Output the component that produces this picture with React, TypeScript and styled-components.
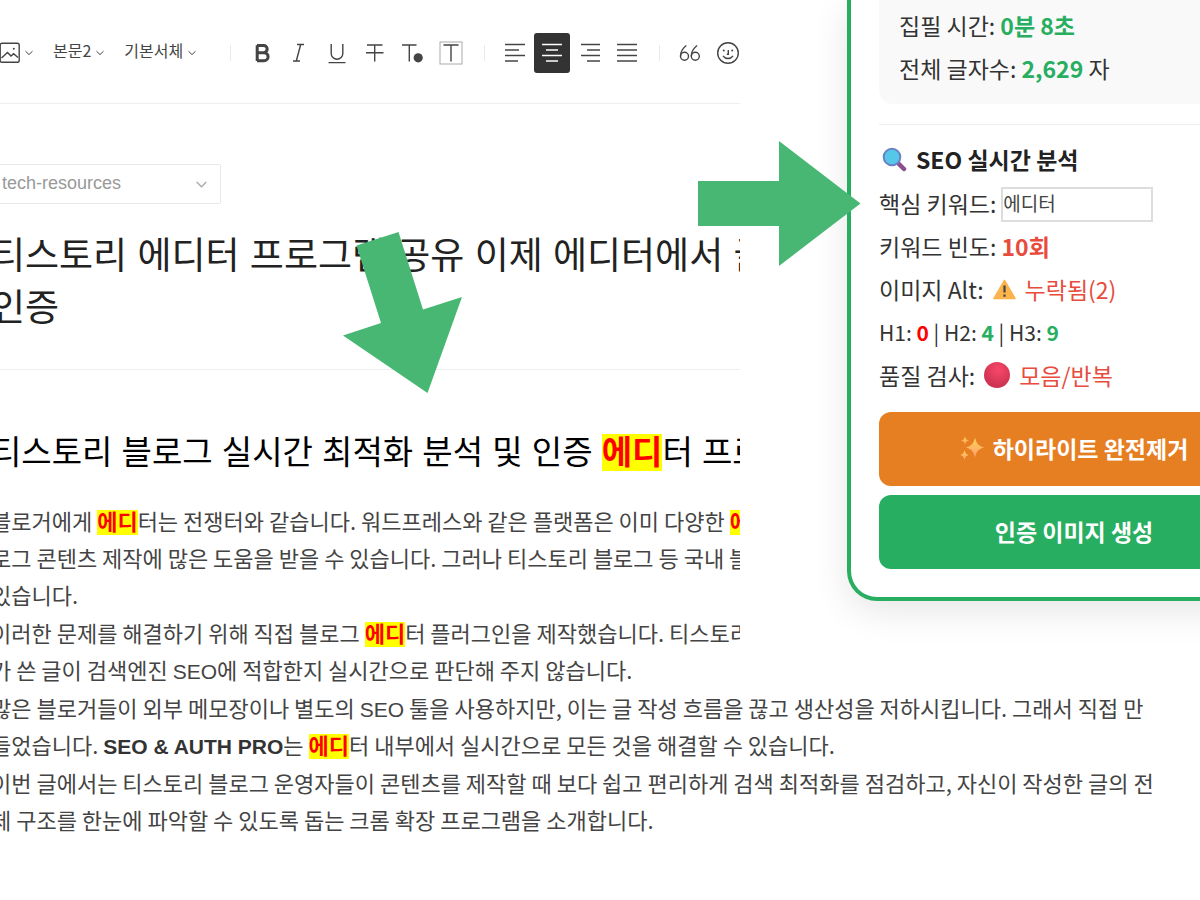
import React from "react";
import styled, { createGlobalStyle } from "styled-components";

const korean = `"Noto Sans CJK KR", "Liberation Sans", sans-serif`;
const latin = `"Liberation Sans", "Noto Sans CJK KR", sans-serif`;
const green = "#27ae60";
const red = "#e74c3c";

const GlobalStyle = createGlobalStyle`
  *, *::before, *::after { box-sizing: border-box; }
  body { margin: 0; background: #fff; color: #333; font-family: ${korean}; }
  h1, h2, h3, p { margin: 0; font-weight: 400; }
  button, input, select { font-family: inherit; }
`;

const Page = styled.div`
  position: relative;
  display: grid;
  grid-template-columns: minmax(0, 37fr) minmax(0, 23fr);
  align-items: start;
  min-height: 100vh;
  overflow: hidden;
`;

/* ---------- editor ---------- */

const Editor = styled.main`
  min-width: 0;
`;

const Toolbar = styled.div`
  display: flex;
  align-items: center;
  padding: 33px 0 30px;
  border-bottom: 1px solid #eee;
  overflow: hidden;
`;

const Menus = styled.div`
  display: flex;
  flex: none;
  gap: 20px;
  margin-right: 19px;
`;

const MenuButton = styled.button`
  display: flex;
  align-items: center;
  gap: 5px;
  padding: 0;
  border: 0;
  background: none;
  color: #444;
  font-size: 16px;
  line-height: 34px;
`;

const MenuLabel = styled.span`
  padding-bottom: 6px;
`;

const Divider = styled.span`
  flex: none;
  width: 1px;
  height: 16px;
  margin: 0 12px 0 15px;
  background: #eaeaea;
`;

const Tools = styled.div<{ $gap: number }>`
  display: flex;
  flex: none;
  gap: ${(p) => p.$gap}px;
`;

const Tool = styled.button<{ $active?: boolean }>`
  display: grid;
  place-items: center;
  width: 36px;
  height: 40px;
  padding: 0;
  border: 0;
  border-radius: 3px;
  background: ${(p) => (p.$active ? "#333" : "none")};
  color: ${(p) => (p.$active ? "#fff" : "#444")};
`;

const CategoryBox = styled.div`
  display: grid;
  align-items: center;
  width: 221px;
  margin-top: 60px;
`;

const CategorySelect = styled.select`
  grid-area: 1 / 1;
  appearance: none;
  height: 40px;
  padding: 0 0 2px 2px;
  border: 1px solid #e8e8e8;
  border-left: 0;
  border-radius: 0 2px 2px 0;
  background: #fff;
  color: #999;
  font-family: ${latin};
  font-size: 18px;
`;

const CategoryArrow = styled.span`
  grid-area: 1 / 1;
  justify-self: end;
  display: flex;
  padding-right: 14px;
  color: #aaa;
  pointer-events: none;
`;

const Title = styled.h1`
  padding: 27px 0 34px;
  border-bottom: 1px solid #eee;
  overflow: hidden;
  color: #222;
  font-family: ${latin};
  font-size: 37px;
  line-height: 52px;
`;

const Article = styled.article`
  padding: 59px 0 48px;
`;

const Heading = styled.h2`
  margin-bottom: 25px;
  overflow: hidden;
  color: #000;
  font-family: ${latin};
  font-size: 33px;
  line-height: 48px;
`;

const Paragraph = styled.p`
  margin-bottom: 1px;
  color: #444;
  font-size: 22px;
  line-height: 37px;
`;

const Line = styled.span<{ $clipped?: boolean }>`
  display: block;
  overflow: ${(p) => (p.$clipped ? "hidden" : "visible")};
  white-space: nowrap;
`;

/* The column starts slightly beyond the window's left edge. */
const Bleed = styled.span`
  display: block;
  margin-left: -9px;
  white-space: nowrap;
`;

const Hit = styled.mark`
  background: #ff0;
  color: #f00;
  font-family: ${latin};
  font-weight: 700;
  line-height: 1;
`;

const Latin = styled.span`
  font-family: ${latin};
  font-size: 21px;
  line-height: 1;
`;

const StrongLatin = styled(Latin).attrs({ as: "strong" })`
  color: #333;
`;

/* ---------- widget ---------- */

const Widget = styled.aside`
  margin: 0 -101px 0 107px;
  padding: 0 28px 28px;
  border: 4px solid ${green};
  border-top: 0;
  border-radius: 0 0 30px 30px;
  background: #fff;
  box-shadow: 0 10px 36px rgba(0, 0, 0, 0.1);
  color: #333;
  font-size: 23px;
`;

const Stats = styled.div`
  padding: 4px 20px 14px;
  border-radius: 0 0 14px 14px;
  background: #f9f9f9;
  line-height: 43px;
`;

const Value = styled.span<{ $color: string; $bold?: boolean }>`
  color: ${(p) => p.$color};
  font-weight: ${(p) => (p.$bold ? 700 : 400)};
`;

const Analysis = styled.section`
  margin-top: 20px;
  padding-top: 13px;
  border-top: 1px solid #eee;
`;

const AnalysisTitle = styled.h3`
  display: flex;
  align-items: center;
  gap: 9px;
  padding-left: 3px;
  color: #222;
  font-size: 23px;
  font-weight: 700;
  line-height: 43px;
`;

const Row = styled.div`
  display: flex;
  align-items: center;
  height: 43px;
  white-space: pre;
`;

const SmallRow = styled(Row)`
  font-size: 21px;
`;

const KeywordInput = styled.input`
  width: 152px;
  height: 35px;
  margin: 4px 0 0 5px;
  padding: 0 0 4px;
  border: 2px solid #ddd;
  color: #444;
  font-size: 19px;
`;

const Mark = styled.svg`
  flex: none;
  margin: 0 9px;
`;

const Actions = styled.div`
  display: grid;
  gap: 9px;
  margin-top: 16px;
`;

const Action = styled.button<{ $color: string }>`
  display: flex;
  align-items: center;
  justify-content: center;
  gap: 9px;
  height: 74px;
  padding: 0 0 2px;
  border: 0;
  border-radius: 12px;
  background: ${(p) => p.$color};
  color: #fff;
  font-size: 23px;
  font-weight: 700;
`;

/* ---------- annotation arrows ---------- */

const Arrow = styled.svg<{ $x: number; $y: number }>`
  position: absolute;
  left: ${(p) => p.$x}px;
  top: ${(p) => p.$y}px;
  fill: #48b774;
  pointer-events: none;
`;

const Chevron = ({ size = 8 }: { size?: number }) => (
  <svg width={size} height={size} viewBox="0 0 8 8" fill="none" stroke="currentColor" strokeWidth="1">
    <path d="M0.5 2.2 4 5.6 7.5 2.2" />
  </svg>
);

const Glyph = ({ children }: { children: React.ReactNode }) => (
  <svg width="24" height="24" viewBox="0 0 24 24" fill="none" stroke="currentColor" strokeWidth="1.4">
    {children}
  </svg>
);

const Lines = ({ rows }: { rows: [number, number][] }) => (
  <Glyph>
    {rows.map(([a, b], i) => (
      <path key={i} d={`M${a} ${3.5 + i * 5.5}H${b}`} strokeWidth="1.5" />
    ))}
  </Glyph>
);

export default function App() {
  return (
    <>
      <GlobalStyle />
      <Page>
        <Editor>
          <Toolbar>
            <Menus>
              <MenuButton aria-label="이미지">
                <svg width="20" height="22" viewBox="0 0 20 22" fill="none" stroke="currentColor" strokeWidth="1.4">
                  <rect x="0.2" y="1.3" width="19" height="19" rx="1.8" />
                  <path d="M1.5 16 7.5 10.5 11 14l2.6-2.3L18 15.5" />
                  <circle cx="13.8" cy="6.8" r="1" fill="currentColor" stroke="none" />
                </svg>
                <Chevron />
              </MenuButton>
              <MenuButton>
                <MenuLabel>본문2</MenuLabel>
                <Chevron />
              </MenuButton>
              <MenuButton>
                <MenuLabel>기본서체</MenuLabel>
                <Chevron />
              </MenuButton>
            </Menus>
            <Divider />
            <Tools $gap={2}>
              <Tool aria-label="굵게">
                <Glyph>
                  <path d="M8.2 4.3V20M8 4.500h6.600a3.600 3.600 0 0 1 0 7.200H8.500h6.600a4 4 0 0 1 0 8H8" strokeWidth="3" />
                </Glyph>
              </Tool>
              <Tool aria-label="기울임">
                <Glyph>
                  <path d="M10 3.500h7M6 20h7M13.700 3.500 9.300 20" />
                </Glyph>
              </Tool>
              <Tool aria-label="밑줄">
                <Glyph>
                  <path d="M6.200 3v9.500a5.800 5.800 0 0 0 11.600 0V3M3.500 21.600h17" />
                </Glyph>
              </Tool>
              <Tool aria-label="취소선">
                <Glyph>
                  <path d="M4 4h15.500M3 11.800h17.500M11.700 4v16.500" />
                </Glyph>
              </Tool>
              <Tool aria-label="글자색">
                <Glyph>
                  <path d="M1 4h14.500M8.300 4v16.500" />
                  <circle cx="17.200" cy="16.800" r="4.600" fill="currentColor" stroke="none" />
                </Glyph>
              </Tool>
              <Tool aria-label="글자 배경색">
                <Glyph>
                  <rect x="1" y="1" width="22" height="22" stroke="#aaa" strokeWidth="1" />
                  <path d="M4.500 4h15M12 4v16.500" />
                </Glyph>
              </Tool>
            </Tools>
            <Divider />
            <Tools $gap={1}>
              <Tool aria-label="왼쪽 정렬">
                <Lines rows={[[2, 22], [2, 16], [2, 22], [2, 15]]} />
              </Tool>
              <Tool $active aria-label="가운데 정렬">
                <Lines rows={[[2, 22], [6, 18], [2, 22], [6, 18]]} />
              </Tool>
              <Tool aria-label="오른쪽 정렬">
                <Lines rows={[[4, 23], [10, 23], [4, 23], [10, 23]]} />
              </Tool>
              <Tool aria-label="양쪽 정렬">
                <Lines rows={[[3, 23], [3, 23], [3, 23], [3, 23]]} />
              </Tool>
            </Tools>
            <Divider />
            <Tools $gap={2}>
              <Tool aria-label="인용구">
                <Glyph>
                  <circle cx="6.500" cy="15.300" r="4" />
                  <circle cx="17.300" cy="15.300" r="4" />
                  <path d="M8.300 4.500C5 7 2.500 10.500 2.500 15.300M19.100 4.500c-3.300 2.500-5.800 6-5.800 10.800" />
                </Glyph>
              </Tool>
              <Tool aria-label="이모티콘">
                <Glyph>
                  <circle cx="12" cy="12" r="10.300" />
                  <path d="M7 14.800c2.500 3.600 7.500 3.600 10 0M12.300 9v4.300h-1.500" />
                  <circle cx="7.800" cy="9.600" r="1" fill="currentColor" stroke="none" />
                  <circle cx="16.200" cy="9.600" r="1" fill="currentColor" stroke="none" />
                </Glyph>
              </Tool>
            </Tools>
          </Toolbar>

          <CategoryBox>
            <CategorySelect aria-label="카테고리" defaultValue="tech-resources">
              <option>tech-resources</option>
            </CategorySelect>
            <CategoryArrow>
              <Chevron size={11} />
            </CategoryArrow>
          </CategoryBox>

          <Title>
            <Bleed>
              티스토리 에디터 프로그램 공유 이제 에디터에서 글
              <br />
              인증
            </Bleed>
          </Title>

          <Article>
            <Heading>
              <Bleed>
                티스토리 블로그 실시간 최적화 분석 및 인증 <Hit>에디</Hit>터 프로
              </Bleed>
            </Heading>
            <Paragraph>
              <Line $clipped>
                <Bleed>
                  블로거에게 <Hit>에디</Hit>터는 전쟁터와 같습니다. 워드프레스와 같은 플랫폼은 이미 다양한 <Hit>에디</Hit>
                </Bleed>
              </Line>
              <Line $clipped>
                <Bleed>로그 콘텐츠 제작에 많은 도움을 받을 수 있습니다. 그러나 티스토리 블로그 등 국내 블</Bleed>
              </Line>
              <Line>
                <Bleed>있습니다.</Bleed>
              </Line>
            </Paragraph>
            <Paragraph>
              <Line $clipped>
                <Bleed>
                  이러한 문제를 해결하기 위해 직접 블로그 <Hit>에디</Hit>터 플러그인을 제작했습니다. 티스토리
                </Bleed>
              </Line>
              <Line>
                <Bleed>
                  가 쓴 글이 검색엔진 <Latin>SEO</Latin>에 적합한지 실시간으로 판단해 주지 않습니다.
                </Bleed>
              </Line>
            </Paragraph>
            <Paragraph>
              <Line>
                <Bleed>
                  많은 블로거들이 외부 메모장이나 별도의 <Latin>SEO</Latin> 툴을 사용하지만, 이는 글 작성 흐름을 끊고 생산성을 저하시킵니다. 그래서 직접 만
                </Bleed>
              </Line>
              <Line>
                <Bleed>
                  들었습니다. <StrongLatin>SEO &amp; AUTH PRO</StrongLatin>는 <Hit>에디</Hit>터 내부에서 실시간으로 모든 것을 해결할 수 있습니다.
                </Bleed>
              </Line>
            </Paragraph>
            <Paragraph>
              <Line>
                <Bleed>이번 글에서는 티스토리 블로그 운영자들이 콘텐츠를 제작할 때 보다 쉽고 편리하게 검색 최적화를 점검하고, 자신이 작성한 글의 전</Bleed>
              </Line>
              <Line>
                <Bleed>체 구조를 한눈에 파악할 수 있도록 돕는 크롬 확장 프로그램을 소개합니다.</Bleed>
              </Line>
            </Paragraph>
          </Article>
        </Editor>

        <Widget>
          <Stats>
            <p>
              집필 시간: <Value $color={green} $bold>0분 8초</Value>
            </p>
            <p>
              전체 글자수: <Value $color={green} $bold>2,629</Value> 자
            </p>
          </Stats>
          <Analysis>
            <AnalysisTitle>
              <svg width="25" height="25" viewBox="0 0 25 25">
                <path d="m15.500 15.500 6.500 6.500" stroke="#8a4f8f" strokeWidth="4.500" strokeLinecap="round" />
                <circle cx="10" cy="10" r="8.300" fill="#55c8ea" stroke="#6a83c4" strokeWidth="2" />
              </svg>
              SEO 실시간 분석
            </AnalysisTitle>
            <Row>
              <label htmlFor="keyword">핵심 키워드:</label>
              <KeywordInput id="keyword" defaultValue="에디터" />
            </Row>
            <Row>
              키워드 빈도: <Value $color={red} $bold>10회</Value>
            </Row>
            <Row>
              이미지 Alt:
              <Mark width="23" height="23" viewBox="0 0 23 23">
                <path d="M11.500 3.500 22 21.500H1Z" fill="#fbb34c" stroke="#fbb34c" strokeWidth="1.500" strokeLinejoin="round" />
                <path d="M11.500 8.500v7M11.500 17.500v2.200" stroke="#444" strokeWidth="2.200" />
              </Mark>
              <Value $color={red}>누락됨(2)</Value>
            </Row>
            <SmallRow>
              H1: <Value $color="#f00" $bold>0</Value> | H2: <Value $color={green} $bold>4</Value> | H3:{" "}
              <Value $color={green} $bold>9</Value>
            </SmallRow>
            <Row>
              품질 검사:
              <Mark width="26" height="26" viewBox="0 0 26 26">
                <defs>
                  <radialGradient id="ball" cx="0.550" cy="0.300" r="0.700">
                    <stop offset="0" stopColor="#f8486a" />
                    <stop offset="1" stopColor="#c9304f" />
                  </radialGradient>
                </defs>
                <circle cx="13" cy="13" r="13" fill="url(#ball)" />
              </Mark>
              <Value $color={red}>모음/반복</Value>
            </Row>
          </Analysis>
          <Actions>
            <Action $color="#e67e22">
              <svg width="24" height="24" viewBox="0 0 24 24">
                <defs>
                  <linearGradient id="spark" x1="0" y1="0" x2="0" y2="1">
                    <stop offset="0" stopColor="#ffd257" />
                    <stop offset="1" stopColor="#ff9d6e" />
                  </linearGradient>
                </defs>
                <g fill="url(#spark)">
                  <path d="M15 1.500c1.500 6 3 8 9 10-6 2-7.500 4-9 10-1.500-6-3-8-9-10 6-2 7.500-4 9-10Z" />
                  <path d="M5 0c.6 3 1.300 3.900 4 4.500C6.300 5.100 5.600 6 5 9 4.400 6 3.700 5.100 1 4.500 3.700 3.900 4.400 3 5 0Z" />
                  <path d="M4.500 14c.8 3.200 1.700 4.200 4.500 5-2.800.8-3.700 1.800-4.500 5-.8-3.200-1.700-4.200-4.500-5 2.800-.8 3.700-1.800 4.500-5Z" />
                </g>
              </svg>
              하이라이트 완전제거
            </Action>
            <Action $color={green}>인증 이미지 생성</Action>
          </Actions>
        </Widget>

        <Arrow $x={343} $y={232} width="119" height="162" viewBox="0 0 119 162" aria-hidden="true">
          <path d="M13.500 13.500 55.500 0 80 77.500 119 65 84.500 161 0 103.500 38 91Z" />
        </Arrow>
        <Arrow $x={698} $y={141} width="163" height="126" viewBox="0 0 163 126" aria-hidden="true">
          <path d="M0 40H81V0L162.500 62.500 81 125V85H0Z" />
        </Arrow>
      </Page>
    </>
  );
}
